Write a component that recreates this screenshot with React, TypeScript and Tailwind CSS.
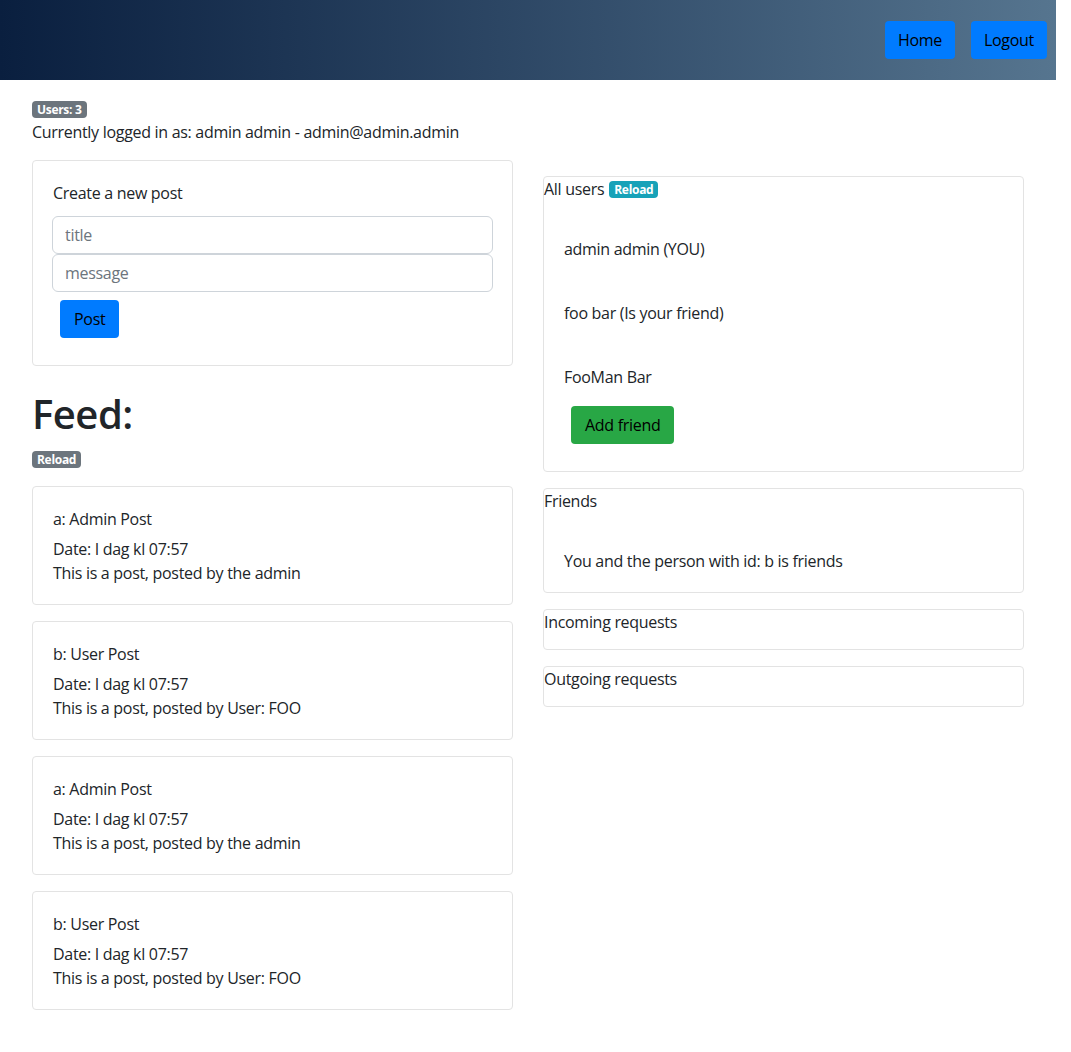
import React from "react";

const posts = [
  { id: "a", title: "Admin Post", msg: "This is a post, posted by the admin" },
  { id: "b", title: "User Post", msg: "This is a post, posted by User: FOO" },
  { id: "a", title: "Admin Post", msg: "This is a post, posted by the admin" },
  { id: "b", title: "User Post", msg: "This is a post, posted by User: FOO" },
];

function Badge({ children, color }: { children: React.ReactNode; color: string }) {
  return (
    <span
      className={`block ${color} text-white text-[12px] font-bold leading-[17px] px-[5px] rounded-[4px] tracking-[-0.3px]`}
    >
      {children}
    </span>
  );
}

function Card({ children, className = "" }: { children: React.ReactNode; className?: string }) {
  return <div className={`border border-[#e3e3e3] rounded-[4px] ${className}`}>{children}</div>;
}

export default function App() {
  return (
    <div
      className="w-[1056px] min-h-[1052px] bg-white text-[#212529] text-[16px] leading-[24px] tracking-[-0.3px]"
      style={{ fontFamily: '"Open Sans", Lato, sans-serif' }}
    >
      {/* header */}
      <header className="h-[80px] bg-gradient-to-r from-[#0a1f3f] to-[#56758f] flex items-center justify-end gap-4 pr-[9px]">
        <button className="h-[38px] px-[13px] bg-[#007bff] text-black rounded-[4px]">Home</button>
        <button className="h-[38px] px-[13px] bg-[#007bff] text-black rounded-[4px]">Logout</button>
      </header>

      <div className="px-8 pt-[21px]">
        <div className="flex">
          <Badge color="bg-[#6c757d]">Users: 3</Badge>
        </div>
        <div className="mt-[2px]">Currently logged in as: admin admin - admin@admin.admin</div>

        <div className="flex gap-[30px] mt-[16px]">
          {/* left column */}
          <div className="w-[481px] flex flex-col">
            <Card className="pt-[20px] pb-[27px] px-[20px]">
              <div>Create a new post</div>
              <div className="mt-[11px] -mx-px flex flex-col">
                <input
                  placeholder="title"
                  className="h-[38px] border border-[#ced4da] rounded-[6px] px-3 placeholder-[#6c757d] outline-none"
                />
                <input
                  placeholder="message"
                  className="h-[38px] border border-[#ced4da] rounded-[6px] px-3 placeholder-[#6c757d] outline-none"
                />
              </div>
              <button className="mt-2 ml-[7px] h-[38px] px-[14px] bg-[#007bff] text-black rounded-[4px]">Post</button>
            </Card>

            <h1 className="mt-[24px] text-[40px] leading-[48px] font-semibold tracking-[-0.5px]">Feed:</h1>
            <div className="mt-[13px] flex">
              <Badge color="bg-[#6c757d]">Reload</Badge>
            </div>

            <div className="mt-[18px] flex flex-col gap-4">
              {posts.map((p, i) => (
                <Card key={i} className="px-[20px] pt-[20px] pb-[19px]">
                  <div>
                    {p.id}: {p.title}
                  </div>
                  <div className="mt-[6px]">Date: I dag kl 07:57</div>
                  <div>{p.msg}</div>
                </Card>
              ))}
            </div>
          </div>

          {/* right column */}
          <div className="w-[481px] flex flex-col gap-4 mt-4">
            <Card className="pb-[27px]">
              <div className="flex items-center gap-[5px]">
                <span>All users</span>
                <Badge color="bg-[#17a2b8]">Reload</Badge>
              </div>
              <ul className="pl-5 pt-4">
                <li className="py-5">admin admin (YOU)</li>
                <li className="py-5">foo bar (Is your friend)</li>
                <li className="pt-5">
                  <div>FooMan Bar</div>
                  <button className="mt-[17px] ml-[7px] h-[38px] px-[14px] bg-[#28a745] text-black rounded-[4px]">
                    Add friend
                  </button>
                </li>
              </ul>
            </Card>

            <Card className="pb-[19px]">
              <div>Friends</div>
              <div className="pl-5 mt-[36px]">You and the person with id: b is friends</div>
            </Card>

            <Card className="pb-[15px]">
              <div>Incoming requests</div>
            </Card>

            <Card className="pb-[15px]">
              <div>Outgoing requests</div>
            </Card>
          </div>
        </div>
      </div>
    </div>
  );
}
